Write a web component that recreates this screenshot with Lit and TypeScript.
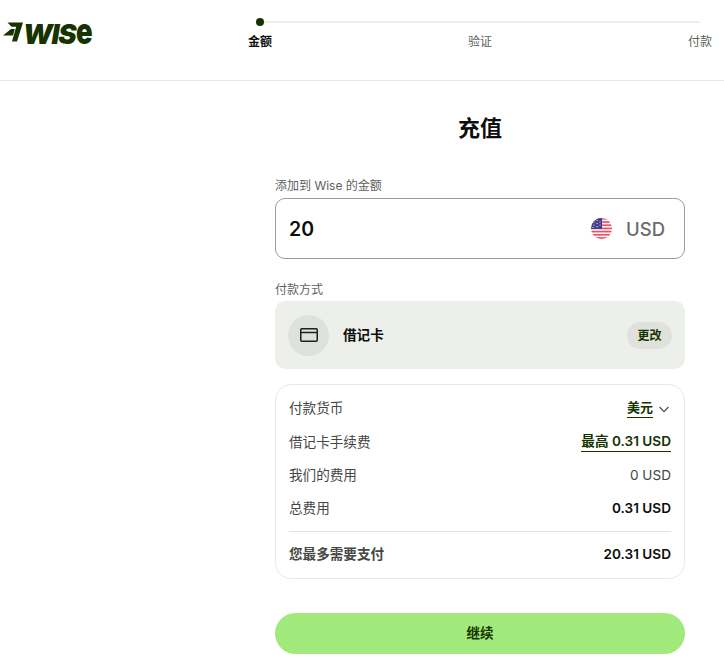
import { LitElement, html, css } from "lit";
import { customElement } from "lit/decorators.js";

@customElement("app-root")
export class AppRoot extends LitElement {
  static styles = css`
    :host {
      display: block;
      width: 724px;
      height: 671px;
      overflow: hidden;
      background: #fff;
      color: #454745;
      font-family: Inter, "Noto Sans CJK SC", sans-serif;
      font-size: 13.6px;
    }
    .header {
      display: flex;
      height: 81px;
      box-sizing: border-box;
      border-bottom: 1px solid #e8e8e6;
    }
    .logo {
      width: 240px;
      padding: 14px 0 0 3px;
      box-sizing: border-box;
      display: flex;
      align-items: flex-start;
      color: #163300;
    }
    .logo svg { width: 21px; height: 20px; margin-top: 8px; flex: none; }
    .word {
      font-family: Inter, sans-serif;
      font-weight: 900;
      font-style: italic;
      font-size: 27.5px;
      line-height: 34px;
      letter-spacing: -1.2px;
      margin-left: -1px;
      white-space: nowrap;
    }
    .e {
      display: inline-block;
      font-style: normal;
      font-size: 36px;
      line-height: 34px;
      letter-spacing: 0;
      transform: scaleX(0.76);
      transform-origin: left;
      margin-left: 1px;
    }
    .stepper {
      width: 484px;
      position: relative;
      padding: 34px 12px 0 8px;
      display: flex;
      justify-content: space-between;
      box-sizing: border-box;
      line-height: 16px;
      font-size: 12px;
      color: #5d5f5d;
    }
    .track {
      position: absolute;
      left: 24px;
      right: 24px;
      top: 21px;
      height: 2px;
      background: #eeeeec;
    }
    .dot {
      position: absolute;
      left: 16px;
      top: 18px;
      width: 8px;
      height: 8px;
      border-radius: 50%;
      background: #163300;
    }
    .step { width: 24px; text-align: center; }
    .step.active { color: #0e0f0c; font-weight: 600; }
    .main {
      width: 410px;
      margin-left: 275px;
      display: flex;
      flex-direction: column;
    }
    h1 {
      margin: 32px 0 0;
      font-size: 22px;
      line-height: 30px;
      font-weight: 600;
      color: #0e0f0c;
      text-align: center;
    }
    .label {
      font-size: 12px;
      line-height: 16px;
      color: #5d5f5d;
    }
    .label.amount { margin-top: 35px; margin-bottom: 4px; }
    .label.method { margin-top: 23px; margin-bottom: 3px; }
    .input {
      height: 61px;
      box-sizing: border-box;
      border: 1px solid #9c9c9c;
      border-radius: 10px;
      display: flex;
      align-items: center;
      padding: 0 19px 0 13px;
    }
    .value {
      flex: 1;
      font-size: 19.5px;
      font-weight: 600;
      color: #0e0f0c;
    }
    .flag { width: 21px; height: 21px; margin-right: 14px; flex: none; }
    .ccy { font-size: 18.5px; font-weight: 500; color: #6a6c6a; }
    .payment {
      height: 68px;
      box-sizing: border-box;
      background: #edefeb;
      border-radius: 10px;
      display: flex;
      align-items: center;
      padding: 0 13px;
    }
    .circle {
      width: 41px;
      height: 41px;
      border-radius: 50%;
      background: #dfe1dc;
      display: flex;
      align-items: center;
      justify-content: center;
      flex: none;
    }
    .circle svg { width: 18px; height: 14px; }
    .pay-name {
      flex: 1;
      margin-left: 14px;
      margin-bottom: 3px;
      font-weight: 600;
      color: #0e0f0c;
    }
    .change {
      width: 45px;
      height: 27px;
      padding-bottom: 2px;
      box-sizing: border-box;
      border-radius: 14px;
      background: #dfe1dc;
      color: #163300;
      font-size: 12px;
      font-weight: 600;
      display: flex;
      align-items: center;
      justify-content: center;
    }
    .card {
      margin-top: 15px;
      height: 195px;
      box-sizing: border-box;
      border: 1px solid #e8e9e6;
      border-radius: 16px;
      padding: 7px 13px 0;
      display: flex;
      flex-direction: column;
    }
    .row {
      display: flex;
      justify-content: space-between;
      align-items: center;
      height: 33px;
      line-height: 18px;
    }
    .row .strong { color: #0e0f0c; font-weight: 600; }
    .row .up { margin-bottom: 2px; }
    .link {
      color: #163300;
      font-weight: 600;
      border-bottom: 1px solid #163300;
      padding-bottom: 1px;
      line-height: 17px;
    }
    .link.low { margin-top: 2px; }
    .link.small { font-size: 13px; }
    .currency { display: flex; align-items: center; gap: 6px; padding-right: 2px; }
    .currency svg { width: 10px; height: 7px; margin-top: 1px; }
    hr {
      margin: 7px 0 0;
      border: none;
      border-top: 1px solid #e4e5e2;
    }
    .row.total { height: 44px; }
    .row.total .k { font-weight: 600; }
    .btn {
      margin-top: 34px;
      height: 41px;
      padding-bottom: 3px;
      box-sizing: border-box;
      border-radius: 21px;
      background: #a0e97a;
      color: #163300;
      font-size: 13.5px;
      font-weight: 600;
      display: flex;
      align-items: center;
      justify-content: center;
    }
  `;

  render() {
    return html`
      <div class="header">
        <div class="logo">
          <svg viewBox="0 0 21 20" aria-hidden="true">
            <path fill="#163300" d="M4.5 0.5H20L14 19.5H9L13.2 4.8H8.5Z" />
            <path fill="#163300" d="M0 13.5L8 7H11.8L10 13.5Z" />
          </svg>
          <span class="word">WIS<span class="e">e</span></span>
        </div>
        <div class="stepper">
          <div class="track"></div>
          <div class="dot"></div>
          <span class="step active">金额</span>
          <span class="step">验证</span>
          <span class="step">付款</span>
        </div>
      </div>
      <div class="main">
        <h1>充值</h1>
        <div class="label amount">添加到 Wise 的金额</div>
        <div class="input">
          <span class="value">20</span>
          <svg class="flag" viewBox="0 0 21 21" aria-hidden="true">
            <defs><clipPath id="c"><circle cx="10.5" cy="10.5" r="10.5" /></clipPath></defs>
            <g clip-path="url(#c)">
              <rect width="21" height="21" fill="#f9f3f4" />
              <rect y="0" width="21" height="1.6" fill="#ee4e63" />
              <rect y="3.2" width="21" height="1.6" fill="#ee4e63" />
              <rect y="6.4" width="21" height="1.6" fill="#ee4e63" />
              <rect y="9.6" width="21" height="1.6" fill="#ee4e63" />
              <rect y="12.8" width="21" height="1.6" fill="#ee4e63" />
              <rect y="16" width="21" height="1.6" fill="#ee4e63" />
              <rect y="19.2" width="21" height="1.8" fill="#ee4e63" />
              <rect width="11" height="11" fill="#41408f" />
              <g fill="#fff">
                <circle cx="3" cy="4" r=".6" /><circle cx="6" cy="2.5" r=".6" /><circle cx="9" cy="4" r=".6" />
                <circle cx="3" cy="7" r=".6" /><circle cx="6" cy="5.5" r=".6" /><circle cx="9" cy="7" r=".6" />
                <circle cx="6" cy="8.7" r=".6" /><circle cx="2" cy="9.5" r=".6" />
              </g>
            </g>
          </svg>
          <span class="ccy">USD</span>
        </div>
        <div class="label method">付款方式</div>
        <div class="payment">
          <div class="circle">
            <svg viewBox="0 0 18 14" fill="none" stroke="#1f211e" stroke-width="1.5" aria-hidden="true">
              <rect x=".75" y=".75" width="16.5" height="12.5" rx="1" />
              <path d="M.75 4.5H17.25" />
            </svg>
          </div>
          <span class="pay-name">借记卡</span>
          <span class="change">更改</span>
        </div>
        <div class="card">
          <div class="row">
            <span class="up">付款货币</span>
            <span class="currency">
              <span class="link small">美元</span>
              <svg viewBox="0 0 10 7" fill="none" stroke="#454745" stroke-width="1.1" aria-hidden="true">
                <path d="M.6 1L5 5.6L9.4 1" />
              </svg>
            </span>
          </div>
          <div class="row"><span>借记卡手续费</span><span class="link low">最高 0.31 USD</span></div>
          <div class="row"><span>我们的费用</span><span>0 USD</span></div>
          <div class="row"><span>总费用</span><span class="strong">0.31 USD</span></div>
          <hr />
          <div class="row total"><span class="k">您最多需要支付</span><span class="strong">20.31 USD</span></div>
        </div>
        <div class="btn">继续</div>
      </div>
    `;
  }
}
